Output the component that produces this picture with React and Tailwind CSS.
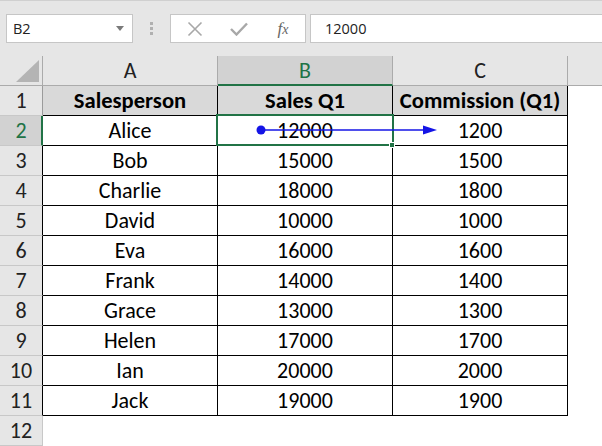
import React from "react";

const rows = [
  ["Alice", "12000", "1200"],
  ["Bob", "15000", "1500"],
  ["Charlie", "18000", "1800"],
  ["David", "10000", "1000"],
  ["Eva", "16000", "1600"],
  ["Frank", "14000", "1400"],
  ["Grace", "13000", "1300"],
  ["Helen", "17000", "1700"],
  ["Ian", "20000", "2000"],
  ["Jack", "19000", "1900"],
];

const font = { fontFamily: '"Carlito", "Open Sans", sans-serif' };

function TopBar() {
  return (
    <div className="h-[56px] bg-[#e6e6e6] border-t border-[#d0d0d0] relative" style={{ fontFamily: '"Open Sans", "Noto Sans", sans-serif' }}>
      <div className="flex items-start pt-[13px] pl-[6px]">
        <div className="w-[127px] h-[29px] bg-white border border-[#c6c6c6] flex items-center justify-between pl-[6px] pr-[8px]">
          <span className="text-[14.5px] text-[#222]">B2</span>
          <svg width="8" height="5" viewBox="0 0 8 5"><path d="M0 0H8L4 5Z" fill="#7a7a7a" /></svg>
        </div>
        <div className="w-[37px] h-[29px] flex flex-col items-center justify-center gap-[2px]">
          <div className="w-[3px] h-[3px] bg-[#b0b0b0]" />
          <div className="w-[3px] h-[3px] bg-[#b0b0b0]" />
          <div className="w-[3px] h-[3px] bg-[#b0b0b0]" />
        </div>
        <div className="w-[136px] h-[29px] bg-white border border-[#c6c6c6] flex items-center">
          <div className="w-[45px] flex justify-center pl-[2px]">
            <svg width="16" height="16" viewBox="0 0 16 16"><path d="M1.5 1.5L14.5 14.5M14.5 1.5L1.5 14.5" stroke="#a8a8a8" strokeWidth="1.6" /></svg>
          </div>
          <div className="w-[45px] flex justify-center">
            <svg width="18" height="14" viewBox="0 0 18 14"><path d="M1 7L6.5 12.5L17 1.5" stroke="#a8a8a8" strokeWidth="2.4" fill="none" /></svg>
          </div>
          <div className="w-[44px] flex justify-center">
            <span className="text-[17px] italic text-[#666]" style={{ fontFamily: '"Liberation Serif", serif' }}>
              f<span className="text-[14px]">x</span>
            </span>
          </div>
        </div>
        <div className="ml-[4px] flex-1 h-[29px] bg-white border border-[#c6c6c6] border-r-0 flex items-center pl-[14px]">
          <span className="text-[14.5px] text-[#222]">12000</span>
        </div>
      </div>
    </div>
  );
}

export default function App() {
  return (
    <div className="w-[602px] h-[446px] overflow-hidden bg-white relative" style={font}>
      <TopBar />
      <div className="grid grid-cols-[43px_175px_175px_175px_1fr] text-[22px] text-black">
        {/* header row */}
        <div className="h-[30px] bg-[#e6e6e6] border-r border-b border-[#ababab] relative">
          <svg className="absolute left-[16px] top-[4px]" width="24" height="22" viewBox="0 0 24 22"><path d="M23 0V22H0Z" fill="#b4b4b4" /></svg>
        </div>
        <div className="h-[30px] bg-[#e6e6e6] border-r border-b border-[#ababab] flex items-center justify-center text-[#222]">A</div>
        <div className="h-[30px] bg-[#d2d2d2] border-r border-[#ababab] border-b-2 border-b-[#217346] flex items-center justify-center text-[#217346] pt-[1px]">B</div>
        <div className="h-[30px] bg-[#e6e6e6] border-r border-b border-[#ababab] flex items-center justify-center text-[#222]">C</div>
        <div className="h-[30px] bg-[#e6e6e6] border-b border-[#ababab]" />

        {/* row 1 */}
        <div className="h-[30px] bg-[#e6e6e6] border-r border-b border-[#c8c8c8] border-r-[#9b9b9b] flex items-center justify-center text-[#222]">1</div>
        <div className="h-[30px] bg-[#d9d9d9] border-r border-b border-black flex items-center justify-center font-bold text-[22.6px]">Salesperson</div>
        <div className="h-[30px] bg-[#d9d9d9] border-r border-b border-black flex items-center justify-center font-bold text-[22.6px]">Sales Q1</div>
        <div className="h-[30px] bg-[#d9d9d9] border-r border-b border-black flex items-center justify-center font-bold text-[22.6px]">Commission (Q1)</div>
        <div className="h-[30px]" />

        {rows.map((r, i) => {
          const sel = i === 0;
          return (
            <React.Fragment key={i}>
              <div
                className={
                  sel
                    ? "h-[30px] bg-[#d2d2d2] border-b border-[#c8c8c8] border-r-2 border-r-[#217346] flex items-center justify-center text-[#217346] pl-[1px]"
                    : "h-[30px] bg-[#e6e6e6] border-b border-[#c8c8c8] border-r border-r-black flex items-center justify-center text-[#222]"
                }
              >
                {i + 2}
              </div>
              <div className="h-[30px] border-r border-b border-black flex items-center justify-center">{r[0]}</div>
              <div className="h-[30px] border-r border-b border-black flex items-center justify-center">{r[1]}</div>
              <div className="h-[30px] border-r border-b border-black flex items-center justify-center">{r[2]}</div>
              <div className="h-[30px]" />
            </React.Fragment>
          );
        })}

        {/* row 12 */}
        <div className="h-[30px] bg-[#e6e6e6] border-r border-b border-[#c8c8c8] flex items-center justify-center text-[#222]">12</div>
        <div className="h-[30px]" />
        <div className="h-[30px]" />
        <div className="h-[30px]" />
        <div className="h-[30px]" />
      </div>

      {/* selection box */}
      <div className="absolute left-[216px] top-[114px] w-[178px] h-[32px] border-2 border-[#217346] pointer-events-none" />
      <div className="absolute left-[389px] top-[142px] w-[6px] h-[6px] bg-[#217346] border border-white" />

      {/* trace arrow */}
      <svg className="absolute left-0 top-0 pointer-events-none" width="602" height="446">
        <circle cx="261" cy="130" r="4.5" fill="#1414e6" />
        <line x1="261" y1="130" x2="425" y2="130" stroke="#1414e6" strokeWidth="1.6" />
        <path d="M423 125.5L437 130L423 134.5Z" fill="#1414e6" />
      </svg>
    </div>
  );
}
